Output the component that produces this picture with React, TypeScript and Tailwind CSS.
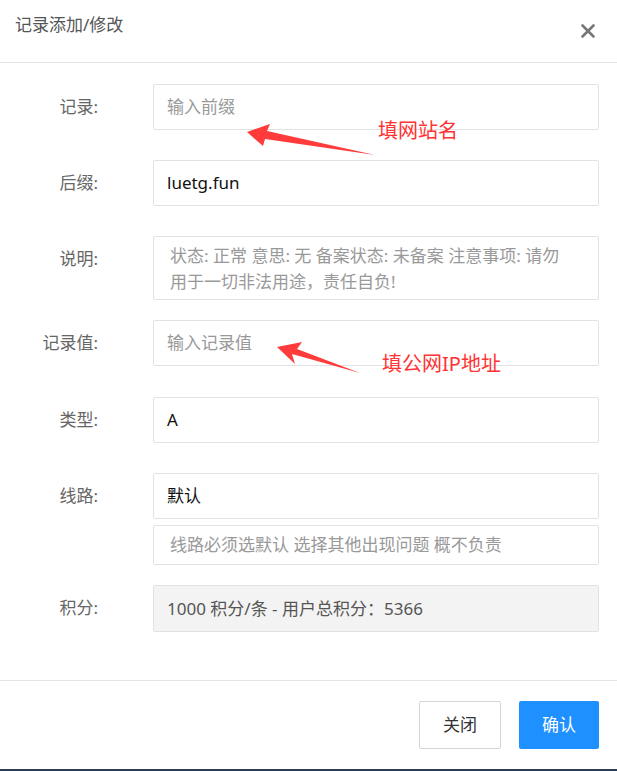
const font = { fontFamily: '"Noto Sans", "Noto Sans CJK SC", sans-serif' };

function Row({ label, children }: { label: string; children: React.ReactNode }) {
  return (
    <div className="flex items-start">
      <div className="w-[98px] shrink-0 text-right text-[17px] leading-[46px] text-[#666]">{label}</div>
      <div className="ml-[55px] flex w-[446px] flex-col gap-[6px]">{children}</div>
    </div>
  );
}

function Field({ value, placeholder, disabled, h = "h-[46px]" }: { value?: string; placeholder?: string; disabled?: boolean; h?: string }) {
  return (
    <div
      className={`${h} flex items-center rounded-[2px] border border-[#e2e2e2] px-[13px] text-[17px] ${
        disabled ? "bg-[#f3f3f3] text-[#555]" : "bg-white"
      } ${value ? (disabled ? "" : "text-[#111]") : "text-[#999]"}`}
    >
      {value ?? placeholder}
    </div>
  );
}

export default function App() {
  return (
    <div className="relative h-[771px] w-[617px] overflow-hidden bg-white" style={font}>
      <div className="flex h-[63px] items-center justify-between border-b border-[#e6e6e6] pb-[12px] pl-[15px] pr-[22px]">
        <h1 className="text-[17px] text-[#555]">记录添加/修改</h1>
        <svg width="14" height="14" viewBox="0 0 14 14" className="mt-[12px]">
          <path d="M1.5 1.5 L12.5 12.5 M12.5 1.5 L1.5 12.5" stroke="#777" strokeWidth="2.6" strokeLinecap="round" />
        </svg>
      </div>

      <div className="flex flex-col pt-[21px]">
        <Row label="记录:">
          <Field placeholder="输入前缀" />
        </Row>
        <div className="h-[30px]" />
        <Row label="后缀:">
          <Field value="luetg.fun" />
        </Row>
        <div className="h-[30px]" />
        <Row label="说明:">
          <div className="h-[64px] rounded-[2px] border border-[#e2e2e2] pl-[16px] pr-[26px] pt-[6px] text-[17px] leading-[26px] text-[#999]">
            状态: 正常 意思: 无 备案状态: 未备案 注意事项: 请勿用于一切非法用途，责任自负!
          </div>
        </Row>
        <div className="h-[20px]" />
        <Row label="记录值:">
          <Field placeholder="输入记录值" />
        </Row>
        <div className="h-[31px]" />
        <Row label="类型:">
          <Field value="A" />
        </Row>
        <div className="h-[30px]" />
        <Row label="线路:">
          <Field value="默认" />
          <div className="flex h-[40px] items-center rounded-[2px] border border-[#e2e2e2] px-[16px] text-[17px] text-[#999]">
            线路必须选默认 选择其他出现问题 概不负责
          </div>
        </Row>
        <div className="h-[20px]" />
        <Row label="积分:">
          <Field value="1000 积分/条 - 用户总积分：5366" disabled h="h-[47px]" />
        </Row>
      </div>

      <div className="absolute left-0 right-0 top-[680px] flex h-[89px] items-start justify-end gap-[18px] border-t border-[#e6e6e6] pr-[18px] pt-[20px]">
        <button className="h-[48px] w-[82px] rounded-[2px] border border-[#d6d6d6] bg-white text-[17px] text-[#333]">关闭</button>
        <button className="h-[48px] w-[80px] rounded-[2px] bg-[#1e90ff] text-[17px] text-white">确认</button>
      </div>
      <div className="absolute bottom-0 left-0 right-0 h-[2px] bg-[#2b3d55]" />

      <svg className="pointer-events-none absolute left-0 top-0" width="617" height="771">
        <polygon points="247,132 270,124 267,131 375,155 265,139 263,146" fill="#ff3b3b" />
        <polygon points="277,347 302,342 297,349 360,373 292,354 295,364" fill="#ff3b3b" />
      </svg>
      <div className="absolute left-[378px] top-[118px] text-[20px] leading-[26px] text-[#ff3333]">填网站名</div>
      <div className="absolute left-[382px] top-[351px] text-[20px] leading-[26px] text-[#ff3333]">填公网IP地址</div>
    </div>
  );
}
